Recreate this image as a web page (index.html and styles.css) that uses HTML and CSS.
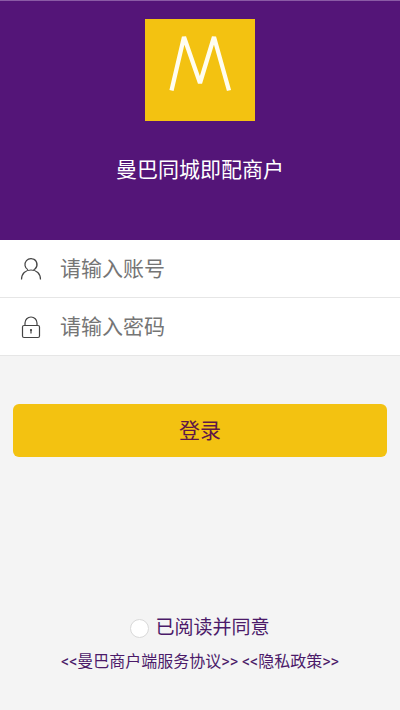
FILE: index.html
```html
<!DOCTYPE html>
<html lang="zh-CN">
<head>
<meta charset="utf-8">
<meta name="viewport" content="width=device-width, initial-scale=1">
<title>曼巴同城即配商户</title>
<link rel="stylesheet" href="styles.css">
</head>
<body>
<header class="brand">
  <svg class="logo" viewBox="0 0 110 102" aria-hidden="true">
    <rect width="110" height="102" fill="#f3c211"/>
    <path d="M26.500 71.500 39 18 55 64 69 18 84 71.500" fill="none" stroke="#fffdf0" stroke-width="4.300" stroke-linejoin="bevel"/>
  </svg>
  <h1 class="title">曼巴同城即配商户</h1>
</header>
<form class="login">
  <label class="field">
    <svg class="icon" viewBox="0 0 24 24" aria-hidden="true">
      <path d="M14.500 13A6 6 0 1 0 9 12.800M16 12a6 6 0 0 0-1.500-10"/>
      <path d="M2.500 22.500C2.500 16.500 6.500 13 12 13s9.500 3.500 9.500 9.500"/>
    </svg>
    <input class="input" type="text" placeholder="请输入账号" aria-label="账号">
  </label>
  <label class="field">
    <svg class="icon" viewBox="0 0 24 24" aria-hidden="true">
      <rect x="3.500" y="10.500" width="17" height="12" rx="1.500"/>
      <path d="M6 10.500V8a6 6 0 0 1 12 0v2.500M12 15v3.500"/>
      <circle class="keyhole" cx="12" cy="15" r=".5"/>
    </svg>
    <input class="input" type="password" placeholder="请输入密码" aria-label="密码">
  </label>
  <button class="submit" type="submit">登录</button>
  <footer class="terms">
    <label class="agree"><input class="check" type="checkbox">已阅读并同意</label>
    <p class="links"><a href="#service">&lt;&lt;曼巴商户端服务协议&gt;&gt;</a> <a href="#privacy">&lt;&lt;隐私政策&gt;&gt;</a></p>
  </footer>
</form>
</body>
</html>
```
FILE: styles.css
```css
* {
  box-sizing: border-box;
}

body {
  display: flex;
  flex-direction: column;
  min-height: 100vh;
  margin: 0;
  background: #f4f4f4;
  color: #4b1a69;
  font-family: Roboto, "Noto Sans CJK SC", sans-serif;
}

.brand {
  display: flex;
  flex-direction: column;
  align-items: center;
  gap: 33px;
  padding: 18px 16px 53px;
  border-top: 1px solid #8a5ba5;
  background: #541578;
}

.logo {
  display: block;
  width: 110px;
  height: 102px;
}

.title {
  margin: 0;
  color: #fff;
  font-size: 21px;
  font-weight: 400;
  line-height: 33px;
}

.login {
  display: flex;
  flex: 1;
  flex-direction: column;
}

.field {
  display: flex;
  align-items: center;
  gap: 17px;
  min-height: 58px;
  padding: 0 19px;
  border-bottom: 1px solid #e6e6e6;
  background: #fff;
}

.icon {
  flex: none;
  width: 24px;
  height: 24px;
  fill: none;
  stroke: #444;
  stroke-width: 1.2;
}

.keyhole {
  fill: #444;
}

.input {
  flex: 1;
  min-width: 0;
  padding: 0;
  border: 0;
  outline: 0;
  background: none;
  color: #333;
  font: inherit;
  font-size: 21px;
  line-height: 32px;
}

.input::placeholder {
  color: #757575;
}

.submit {
  min-height: 53px;
  margin: 48px 13px 0;
  padding: 0 0 4px;
  border: 0;
  border-radius: 6px;
  background: #f3c211;
  color: #5d1748;
  font: inherit;
  font-size: 21px;
}

.terms {
  margin-top: auto;
  padding-bottom: 36px;
  text-align: center;
}

.agree {
  display: flex;
  align-items: center;
  justify-content: center;
  gap: 6px;
  font-size: 19px;
  line-height: 28px;
}

.check {
  width: 19px;
  height: 19px;
  margin: 0;
  border: 1px solid #d9d9d9;
  border-radius: 50%;
  background: #fff;
  appearance: none;
}

.check:checked {
  background: #541578;
}

.links {
  margin: 8px 0 0;
  font-size: 16px;
  line-height: 24px;
}

.links a {
  color: inherit;
  text-decoration: none;
}
```
